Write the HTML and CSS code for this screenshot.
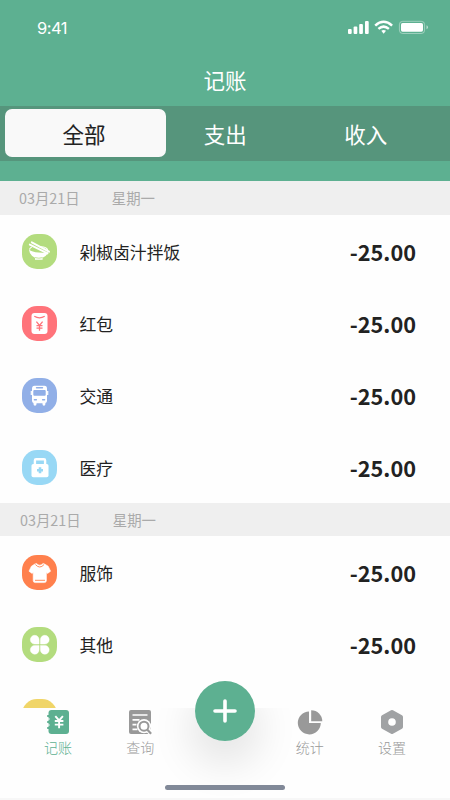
FILE: index.html
```html
<!DOCTYPE html>
<html lang="zh-CN">
<head>
<meta charset="utf-8">
<title>记账</title>
<link rel="stylesheet" href="styles.css">
</head>
<body>
<div class="app">
  <header class="header">
    <div class="status">
      <span class="time">9:41</span>
      <svg class="status-icons" width="82" height="16" viewBox="0 0 82 16">
        <g fill="#fff">
          <rect x="1" y="9" width="3.7" height="5" rx="1"/>
          <rect x="6.6" y="6.5" width="3.7" height="7.5" rx="1"/>
          <rect x="12.2" y="4" width="3.7" height="10" rx="1"/>
          <rect x="18" y="1" width="3.7" height="13" rx="1"/>
          <path d="M34.3 10.8a4.2 4.2 0 0 1 4.7 0l-2.35 2.9z"/>
          <rect x="54" y="3" width="22" height="8.7" rx="1.6"/>
          <path d="M79.5 5.2v4q1.5-.6 1.5-2t-1.5-2z" opacity=".55"/>
        </g>
        <path d="M28.2 5.6q8.4-7.6 16.9 0M31.4 8.9q5.2-4.5 10.5 0" fill="none" stroke="#fff" stroke-width="2.5"/>
        <rect x="52.4" y="1.3" width="25.2" height="12.2" rx="3.3" fill="none" stroke="#fff" stroke-opacity=".4"/>
      </svg>
    </div>
    <h1 class="title">记账</h1>
    <nav class="tabs">
      <span class="tab tab-active">全部</span>
      <span class="tab">支出</span>
      <span class="tab">收入</span>
    </nav>
  </header>

  <main class="list">
    <div class="date"><span>03月21日</span><span>星期一</span></div>
    <div class="row">
      <span class="icon lime"><svg width="35" height="35" viewBox="0 0 35 35"><path d="M7 15.500q3 2.500 9.500 3 7 .5 9.500-.5-1 4.200-5.400 5.700v2.100h-7.600v-2.100Q7.400 21.300 7 15.500z" fill="#fff"/><path d="M17 12.800q7.500-.6 8.700 3.200M7.500 15.500q.5-1.600 2.300-2.400" fill="none" stroke="#fff" stroke-width="1.100"/><path d="M7.800 10.600l17.700 8.800M9.800 8.300l17.200 9.400" stroke="#fff" stroke-width="1.900" stroke-linecap="round"/><path d="M13 23.600q4 1.200 7.600 0" fill="none" stroke="#b3dc7e" stroke-width=".8"/></svg></span>
      <span class="name">剁椒卤汁拌饭</span><b class="amount">-25.00</b>
    </div>
    <div class="row">
      <span class="icon red"><svg width="35" height="35" viewBox="0 0 35 35"><rect x="9.500" y="7" width="16" height="21" rx="3" fill="#fff"/><path d="M12.300 10.300q5.200 3.100 10.400 0M14.400 15.700l3.100 3.800 3.100-3.800M17.500 19.500v5.300M14.500 19.600h6M14.500 22.200h6" fill="none" stroke="#ff737a" stroke-width="1.300"/></svg></span>
      <span class="name">红包</span><b class="amount">-25.00</b>
    </div>
    <div class="row">
      <span class="icon blue"><svg width="35" height="35" viewBox="0 0 35 35"><path d="M12.500 7.800h10q2.500 0 2.500 3v12q0 2-1.600 2.300V26q0 1.700-1.500 1.700T20.500 26v-.7h-6V26q0 1.700-1.500 1.700T11.500 26v-.9Q10 24.800 10 22.800v-12q0-3 2.500-3z" fill="#fff"/><path d="M9.300 13v4M25.700 13v4" stroke="#fff" stroke-width="1.200"/><path d="M14.500 9.700h6M12.400 21.700h2M20.600 21.700h2" stroke="#91afe7" stroke-width="1.400" stroke-linecap="round"/><rect x="11.300" y="12" width="12.400" height="5.700" rx="1" fill="#91afe7"/></svg></span>
      <span class="name">交通</span><b class="amount">-25.00</b>
    </div>
    <div class="row">
      <span class="icon sky"><svg width="35" height="35" viewBox="0 0 35 35"><path d="M12.900 15v-4.600q0-1.200 1.200-1.200h7.800q1.200 0 1.200 1.200V15" fill="none" stroke="#fff" stroke-width="2.400"/><rect x="9.500" y="14" width="17" height="13.200" rx="1.800" fill="#fff"/><path d="M18 17.300v6M15 20.300h6" stroke="#98d8f5" stroke-width="2.600"/></svg></span>
      <span class="name">医疗</span><b class="amount">-25.00</b>
    </div>
    <div class="date date-next"><span>03月21日</span><span>星期一</span></div>
    <div class="row">
      <span class="icon orange"><svg width="35" height="35" viewBox="0 0 35 35"><path d="M12.900 9l1.500-.5q3.300 3.300 6.700 0l1.500.5 3.600 2.200 2.400 5-3 2.200-1.200-.8v8q0 2-2 2h-9.200q-2 0-2-2v-8l-1.200.8-3-2.200 2.400-5z" fill="#fff" stroke="#fff" stroke-width=".6" stroke-linejoin="round"/><path d="M13.400 9.500q4.300 5 8.700 0M13 25.300h10" fill="none" stroke="#ff804d" stroke-width=".9"/></svg></span>
      <span class="name">服饰</span><b class="amount">-25.00</b>
    </div>
    <div class="row">
      <span class="icon lime"><svg width="35" height="35" viewBox="0 0 35 35"><path d="M17.100 17.100h-4.300A4.400 4.400 0 1 1 17.100 12.700zM18.400 17.100h4.400A4.400 4.400 0 1 0 18.400 12.700zM17.100 18.400h-4.300A4.400 4.400 0 1 0 17.100 22.800zM18.400 18.400h4.400A4.400 4.400 0 1 1 18.400 22.800z" fill="#fff" stroke="#fff" stroke-width=".4"/></svg></span>
      <span class="name">其他</span><b class="amount">-25.00</b>
    </div>
    <div class="row"><span class="icon yellow"></span></div>
  </main>

  <footer class="bottom">
    <div class="shade"></div>
    <nav class="menu">
      <a class="item current">
        <svg width="26" height="26" viewBox="0 0 26 26"><rect x="3.500" y="1" width="20.500" height="24" rx="3" fill="#5db091"/><path d="M2.200 7h3M2.200 13h3M2.200 19h3" stroke="#5db091" stroke-width="2.200"/><path d="M2.800 10h2M2.800 16h2" stroke="#fff" stroke-width="1"/><path d="M10.300 7.200l3.800 4.300 3.800-4.300M14.100 11.500v7.700M9.800 12h8.600M9.800 15.600h8.600" stroke="#fff" stroke-width="1.900" fill="none"/></svg>
        <span>记账</span>
      </a>
      <a class="item">
        <svg width="26" height="26" viewBox="0 0 26 26"><rect x="2" y="1" width="22" height="24" rx="2" fill="#999"/><path d="M5.500 6h15M5.500 10.800h7M5.500 15.600h4M5.500 20.400h5" stroke="#fff" stroke-width="1.700"/><circle cx="17" cy="17.200" r="7.100" fill="#fff"/><path d="M21 21l4 4" stroke="#fff" stroke-width="5"/><circle cx="17" cy="17.200" r="4.500" fill="#fff" stroke="#999" stroke-width="2"/><path d="M20.400 20.700l3.700 4" stroke="#999" stroke-width="2.200"/></svg>
        <span>查询</span>
      </a>
      <a class="item stats">
        <svg width="26" height="26" viewBox="0 0 26 26"><path d="M12 2.400V14h11.800A11.500 11.500 0 1 1 12 2.400z" fill="#999"/><path d="M14.200 1.200A11 11 0 0 1 25.300 12.200H14.200z" fill="#999"/></svg>
        <span>统计</span>
      </a>
      <a class="item">
        <svg width="26" height="26" viewBox="0 0 26 26"><path d="M13 3l9 5v10l-9 5-9-5V8z" fill="#a0a2a4" stroke="#a0a2a4" stroke-width="4" stroke-linejoin="round"/><circle cx="13" cy="13" r="3.800" fill="#fff"/></svg>
        <span>设置</span>
      </a>
    </nav>
    <div class="home"></div>
  </footer>
  <button class="fab" aria-label="添加"><svg width="24" height="24" viewBox="0 0 24 24"><path d="M12 2v20M2 12h20" stroke="#fff" stroke-width="3.600" stroke-linecap="round"/></svg></button>
</div>
</body>
</html>
```
FILE: styles.css
```css
* { box-sizing: border-box; }
body {
  margin: 0;
  font-family: "Noto Sans CJK SC", sans-serif;
  color: #222;
}
.app {
  position: relative;
  display: flex;
  flex-direction: column;
  width: 450px;
  height: 800px;
  overflow: hidden;
  background: #fefefe;
}
svg { display: block; flex: none; }

.header {
  flex: none;
  height: 181px;
  background: #5db091;
  color: #fff;
}
.status {
  display: flex;
  justify-content: space-between;
  align-items: center;
  height: 56px;
  padding: 0 21px 0 37px;
}
.time { font: 16.5px/24px Inter, sans-serif; letter-spacing: -0.5px; }
.title {
  height: 50px;
  margin: 0;
  font-size: 21.5px;
  font-weight: 400;
  line-height: 48px;
  text-align: center;
}
.tabs {
  display: flex;
  height: 55px;
  padding: 3px 14px 4px 5px;
  background: #56957c;
}
.tab {
  flex: 1;
  font-size: 21.5px;
  line-height: 49px;
  text-align: center;
}
.tab-active {
  flex: 0 0 161px;
  margin-right: -11px;
  padding-right: 3px;
  border-radius: 7px;
  background: #f9f9f9;
  color: #222;
  -webkit-text-stroke: .1px;
}

.list { flex: none; height: 527px; overflow: hidden; }
.date {
  display: flex;
  gap: 32px;
  height: 34px;
  padding-left: 19px;
  background: #efefef;
  color: #aaa;
  font-size: 14.4px;
  line-height: 34px;
}
.date-next { height: 33px; padding-left: 20px; }
.row {
  display: flex;
  align-items: center;
  height: 72px;
  padding: 0 34px 0 21.5px;
}
.icon {
  flex: none;
  width: 35px;
  height: 35px;
  border-radius: 15px;
}
.lime { background: #b3dc7e; }
.red { background: #ff737a; }
.blue { background: #91afe7; }
.sky { background: #98d8f5; }
.orange { background: #ff804d; }
.yellow { background: #f0d568; }
.name { margin-left: 23px; padding-top: 2px; font-size: 16.8px; }
.amount { margin-left: auto; font-size: 21.7px; }

.bottom {
  position: relative;
  flex: none;
  height: 92px;
  overflow: hidden;
  border-bottom: 2px solid #f7f7f7;
}
.shade {
  position: absolute;
  top: -27px;
  left: 195px;
  width: 60px;
  height: 60px;
  border-radius: 50%;
  box-shadow: 0 18px 40px 6px rgba(0, 0, 0, .1);
}
.menu {
  position: relative;
  display: flex;
  justify-content: space-between;
  height: 77px;
  padding: 1px 37px 0;
}
.item {
  display: flex;
  flex-direction: column;
  align-items: center;
  width: 42px;
  color: #999;
  font-size: 14px;
  font-weight: 300;
  line-height: 25px;
}
.current { color: #5db091; }
.stats { margin-left: 87px; }
.home {
  position: relative;
  width: 120px;
  height: 5px;
  margin: 0 auto;
  border-radius: 3px;
  background: #818998;
}
.fab {
  position: absolute;
  top: 681px;
  left: 194.5px;
  display: grid;
  place-items: center;
  width: 60px;
  height: 60px;
  padding: 0;
  border: 0;
  border-radius: 50%;
  background: #5db091;
}
```
